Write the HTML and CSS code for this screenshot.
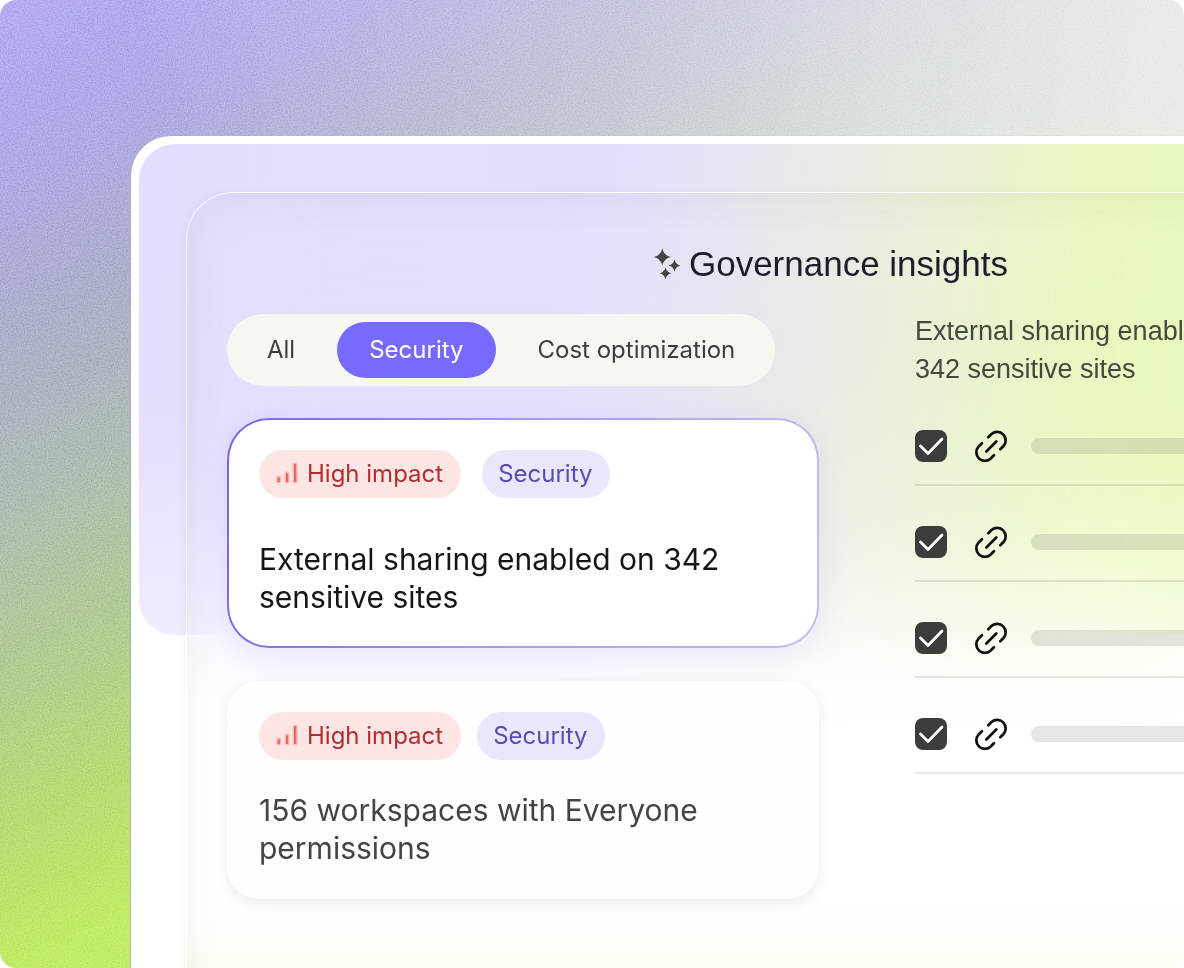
FILE: index.html
```html
<!DOCTYPE html>
<html lang="en">
<head>
    <meta charset="UTF-8">
    <meta name="viewport" content="width=device-width, initial-scale=1">
    <title>Governance insights</title>
    <link rel="stylesheet" href="styles.css">
</head>
<body>

<!-- shared icons -->
<svg class="icon-defs" aria-hidden="true">
    <symbol id="icon-bars" viewBox="0 0 24 24">
        <g fill="#fbb9b5">
            <rect x="1.2" y="14.5" width="5" height="8" rx="2.2"/>
            <rect x="9.6" y="10.5" width="5" height="12" rx="2.2"/>
            <rect x="17.6" y="1.5" width="5" height="21" rx="2.2"/>
        </g>
        <g fill="#e26a69">
            <rect x="2.7" y="16.5" width="2.2" height="4.5"/>
            <rect x="11" y="12.5" width="2.2" height="8.5"/>
            <rect x="19" y="3" width="2.2" height="18"/>
        </g>
    </symbol>
    <symbol id="icon-link" viewBox="0 0 32 32">
        <path d="M13.3 7.2 16.5 4A8.5 8.5 0 0 1 28.5 16L25.3 19.2M18.9 25.3 15.5 28.7A8.5 8.5 0 0 1 3.5 16.7L6.9 13.3M11.3 21.5l10-10" fill="none" stroke="#111" stroke-width="2.7" stroke-linecap="round"/>
    </symbol>
</svg>

<div class="page">
    <svg class="grain" aria-hidden="true">
        <filter id="noise" x="0" y="0" width="100%" height="100%" color-interpolation-filters="sRGB">
            <feTurbulence type="fractalNoise" baseFrequency="0.7" numOctaves="3"/>
            <feColorMatrix values="2 0 0 0 -0.5  2 0 0 0 -0.5  2 0 0 0 -0.5  0 0 0 0 1"/>
        </filter>
        <rect width="100%" height="100%" filter="url(#noise)"/>
    </svg>

    <div class="window">
        <div class="glow"></div>

        <main class="panel">
            <h1 class="panel-title">
                <svg class="sparkle" viewBox="0 0 28 34" fill="#444" aria-hidden="true">
                    <path d="M9.3 1.2Q10.8 8.5 17.8 10Q10.8 11.5 9.3 18.8Q7.8 11.5 .8 10Q7.8 8.5 9.3 1.2Z"/>
                    <path d="M21.5 12.5Q22.7 17.3 27.4 18.5Q22.7 19.7 21.5 24.5Q20.3 19.7 15.6 18.5Q20.3 17.3 21.5 12.5Z"/>
                    <path d="M12.5 20.5Q13.7 25 18.3 26.2Q13.7 27.4 12.5 32.2Q11.3 27.4 6.7 26.2Q11.3 25 12.5 20.5Z"/>
                </svg>
                Governance insights
            </h1>

            <div class="columns">
                <section class="insights">
                    <div class="tabs">
                        <button type="button" class="tab">All</button>
                        <button type="button" class="tab active">Security</button>
                        <button type="button" class="tab">Cost optimization</button>
                    </div>

                    <article class="card selected">
                        <div class="badges">
                            <span class="badge impact"><svg class="bars"><use href="#icon-bars"/></svg>High impact</span>
                            <span class="badge category">Security</span>
                        </div>
                        <h2>External sharing enabled on 342 sensitive sites</h2>
                    </article>

                    <article class="card">
                        <div class="badges">
                            <span class="badge impact"><svg class="bars"><use href="#icon-bars"/></svg>High impact</span>
                            <span class="badge category">Security</span>
                        </div>
                        <h2>156 workspaces with Everyone permissions</h2>
                    </article>
                </section>

                <section class="details">
                    <h3>External sharing enabled on<br>342 sensitive sites</h3>
                    <ul class="sites">
                        <li>
                            <input type="checkbox" aria-label="Site 1" checked>
                            <svg class="link"><use href="#icon-link"/></svg>
                            <span class="placeholder"></span>
                        </li>
                        <li>
                            <input type="checkbox" aria-label="Site 2" checked>
                            <svg class="link"><use href="#icon-link"/></svg>
                            <span class="placeholder"></span>
                        </li>
                        <li>
                            <input type="checkbox" aria-label="Site 3" checked>
                            <svg class="link"><use href="#icon-link"/></svg>
                            <span class="placeholder"></span>
                        </li>
                        <li>
                            <input type="checkbox" aria-label="Site 4" checked>
                            <svg class="link"><use href="#icon-link"/></svg>
                            <span class="placeholder"></span>
                        </li>
                    </ul>
                </section>
            </div>
        </main>
    </div>
</div>

</body>
</html>
```
FILE: styles.css
```css
* {
    box-sizing: border-box;
}

body {
    margin: 0;
    font-family: Inter, "Liberation Sans", sans-serif;
    background: #fff;
}

h1, h2, h3, ul {
    margin: 0;
    padding: 0;
    font-weight: 400;
}

.icon-defs {
    position: absolute;
    width: 0;
    height: 0;
}

.page {
    position: relative;
    display: flex;
    height: 100vh;
    padding: 136px 0 0 131px;
    overflow: hidden;
    border-radius: 16px;
    background:
        linear-gradient(90deg, rgba(241, 240, 245, 0) 12%, rgba(241, 240, 245, 0.35) 50%, rgba(241, 240, 245, 0.7) 76%, rgba(241, 241, 243, 0.88) 100%),
        linear-gradient(155deg, #b5adf4 0%, #b0ace6 12%, #aeb1cc 22%, #afbdb8 32%, #b2cd96 44%, #b9dc76 54%, #c2ec66 64%);
}

/* film grain over the backdrop */
.grain {
    position: absolute;
    inset: 0;
    width: 100%;
    height: 100%;
    opacity: 0.28;
    mix-blend-mode: soft-light;
}

/* runs off the right edge of the page */
.window {
    position: relative;
    flex: 1;
    display: grid;
    padding: 8px 0 0 8px;
    margin-right: -290px;
    border-radius: 40px 0 0 0;
    background: #fff;
    box-shadow: -1px 0 1px rgba(175, 175, 180, 0.8);
}

.glow {
    grid-area: 1 / 1;
    height: 491px;
    border-radius: 36px 0 0 36px;
    background:
        linear-gradient(180deg, rgba(255, 255, 255, 0) 55%, rgba(255, 255, 255, 0.45) 100%),
        linear-gradient(98deg, #e2deff 0%, #e2dffe 34%, #e9eedf 54%, #e8f8bf 69%, #e6fbae 100%);
}

.panel {
    grid-area: 1 / 1;
    margin: 48px 0 -48px 47px;
    padding: 51px 40px 0;
    border-top: 1px solid rgba(255, 255, 255, 0.8);
    border-left: 1px solid rgba(255, 255, 255, 0.8);
    border-radius: 48px 0 0 0;
    background: linear-gradient(180deg, rgba(244, 252, 224, 0) 86%, rgba(244, 252, 224, 0.6) 100%);
    backdrop-filter: blur(56px);
    box-shadow: -3px 0 8px rgba(0, 0, 0, 0.03), inset 0 0 48px rgba(60, 60, 30, 0.06);
}

.panel-title {
    display: flex;
    align-items: center;
    justify-content: center;
    gap: 8px;
    margin-bottom: 28px;
    font-family: "Liberation Sans", Arial, sans-serif;
    font-size: 35px;
    line-height: 40px;
    color: #1c1c2c;
}

.sparkle {
    width: 28px;
    height: 34px;
}

.columns {
    display: grid;
    grid-template-columns: 592px 1fr;
    gap: 96px;
}

.insights {
    padding-top: 2px;
}

.tabs {
    display: inline-flex;
    gap: 10px;
    padding: 8px;
    margin-bottom: 32px;
    border-radius: 36px;
    background: #f7f7f2;
}

.tab {
    height: 56px;
    padding: 0 32px 2px;
    border: none;
    border-radius: 28px;
    background: none;
    font-family: inherit;
    font-size: 24px;
    color: #3d3d3d;
    cursor: pointer;
}

.tab.active {
    background: #7869ff;
    color: #fff;
}

.card {
    padding: 31px 32px 32px;
    border-radius: 32px;
    background: #fefefe;
    box-shadow: 0 4px 16px rgba(0, 0, 0, 0.08);
}

.card.selected {
    padding: 30px;
    margin-bottom: 33px;
    border: 2px solid transparent;
    border-radius: 42px;
    background:
        linear-gradient(#fff, #fff) padding-box,
        linear-gradient(100deg, #7468dc 0%, #a79df0 50%, #c3bcf4 100%) border-box;
    box-shadow: 0 8px 32px rgba(120, 105, 255, 0.12);
}

.badges {
    display: flex;
    gap: 16px;
    margin-bottom: 31px;
}

.selected .badges {
    gap: 21px;
    margin-bottom: 42px;
}

.badge {
    display: flex;
    align-items: center;
    gap: 8px;
    height: 48px;
    padding: 0 18px 2px 16px;
    border-radius: 24px;
    font-size: 24px;
}

.badge.impact {
    background: #fce5e3;
    color: #b02f33;
}

.badge.category {
    background: #e9e7fb;
    color: #564db4;
}

.bars {
    width: 24px;
    height: 24px;
}

.card h2 {
    font-size: 30px;
    line-height: 38px;
    color: #444;
}

.card.selected h2 {
    color: #161616;
}

.details h3 {
    margin-bottom: 2px;
    font-family: "Liberation Sans", Arial, sans-serif;
    font-size: 27px;
    line-height: 38px;
    color: #45483f;
}

.sites {
    list-style: none;
}

.sites li {
    display: flex;
    align-items: center;
    height: 96px;
    padding: 40px 0 22px;
    border-bottom: 2px solid rgba(60, 60, 60, 0.12);
}

.sites input {
    appearance: none;
    width: 32px;
    height: 32px;
    margin: 0 28px 0 0;
    border-radius: 8px;
    background: #3c3c3c;
}

.sites input:checked {
    background-image: url("data:image/svg+xml,%3Csvg xmlns='http://www.w3.org/2000/svg' viewBox='0 0 32 32'%3E%3Cpath d='M5.5 16l7.5 7.5L27 9' fill='none' stroke='white' stroke-width='2.8' stroke-linecap='round' stroke-linejoin='round'/%3E%3C/svg%3E");
}

.link {
    width: 32px;
    height: 32px;
    margin-right: 24px;
}

.placeholder {
    flex: 1;
    height: 16px;
    border-radius: 8px;
    background: rgba(60, 60, 60, 0.13);
}
```
